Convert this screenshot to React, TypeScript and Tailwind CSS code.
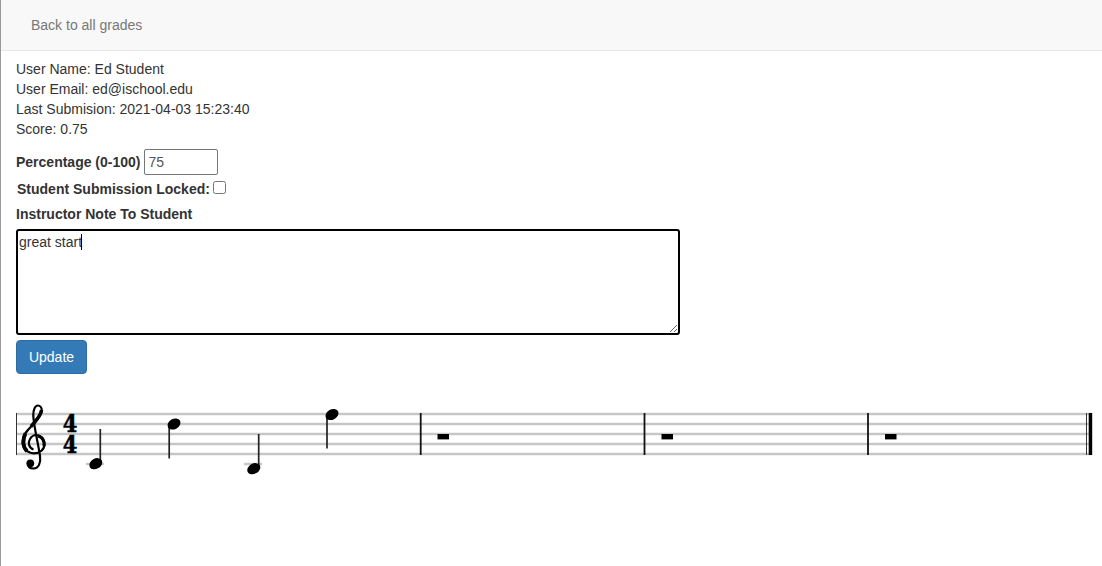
const staffLines = [414, 424, 434, 444, 454];
const barLines = [420.7, 644.5, 868];
const rests = [437.5, 661.5, 885];

const notes = [
  { cx: 95.8, cy: 463.7, stemX: 100.3, stemTop: 429, stemBottom: 463 },
  { cx: 174, cy: 424, stemX: 169.2, stemTop: 424, stemBottom: 458.5 },
  { cx: 253.8, cy: 468.7, stemX: 258.7, stemTop: 434, stemBottom: 468 },
  { cx: 332, cy: 414.5, stemX: 327, stemTop: 414, stemBottom: 448.5 },
];

function Score() {
  return (
    <svg width="1102" height="90" viewBox="0 395 1102 90" className="block -ml-px">
      {staffLines.map((y) => (
        <line key={y} x1="16" x2="1092" y1={y} y2={y} stroke="#c6c6c6" strokeWidth="2.4" />
      ))}
      <line x1="16.5" x2="16.5" y1="413" y2="455" stroke="#333" strokeWidth="1" />
      {barLines.map((x) => (
        <line key={x} x1={x} x2={x} y1="413" y2="455" stroke="#111" strokeWidth="1.8" />
      ))}
      <line x1="1086.5" x2="1086.5" y1="413" y2="455" stroke="#333" strokeWidth="1" />
      <rect x="1088.7" y="413" width="3.5" height="42" fill="#000" />

      {/* treble clef */}
      <path
        d="M33.5 449.5 C29 448 27.5 443 30 439 C31.5 436.5 33.5 435 36 435 C41 435 44.5 439 44.5 444 C44.5 449.5 40 453.3 33.8 453.3 C27 453.3 22.5 448 22.5 441.5 C22.5 434 29 429 33.5 424 C38 419 41.8 415 41.8 410.5 C41.8 407.5 40 405.5 37.8 405.5 C35 405.5 33.3 410 33.3 415 C33.3 424 38.5 445 40 456 C41 463 38.5 468.5 33.5 468.5 C30 468.5 28 466.5 28 464"
        fill="none"
        stroke="#000"
        strokeWidth="2.2"
      />
      <path d="M25.5 433.5 C22.5 439 22.5 447 27 451" fill="none" stroke="#000" strokeWidth="3.8" />
      <path d="M38 436 C42.5 437 44.5 441 44 446" fill="none" stroke="#000" strokeWidth="3.2" />
      <path d="M31 426.5 C36 421 41 415.5 41.5 410" fill="none" stroke="#000" strokeWidth="3.4" />
      <circle cx="30.3" cy="463.3" r="3.9" fill="#000" />

      {/* time signature */}
      <text transform="translate(70 432) scale(1 1.15)" textAnchor="middle" fontFamily="'DejaVu Serif', serif" fontWeight="900" fontSize="21" fill="#000" stroke="#000" strokeWidth="0.5">4</text>
      <text transform="translate(70 452.5) scale(1 1.15)" textAnchor="middle" fontFamily="'DejaVu Serif', serif" fontWeight="900" fontSize="21" fill="#000" stroke="#000" strokeWidth="0.5">4</text>

      {/* ledger lines */}
      <line x1="86" x2="104" y1="464" y2="464" stroke="#c6c6c6" strokeWidth="2.4" />
      <line x1="244" x2="262" y1="464" y2="464" stroke="#c6c6c6" strokeWidth="2.4" />

      {notes.map((n) => (
        <g key={n.cx}>
          <line x1={n.stemX} x2={n.stemX} y1={n.stemTop} y2={n.stemBottom} stroke="#222" strokeWidth="1.7" />
          <ellipse cx={n.cx} cy={n.cy} rx="6.9" ry="5.1" transform={`rotate(-30 ${n.cx} ${n.cy})`} fill="#000" />
        </g>
      ))}

      {rests.map((x) => (
        <rect key={x} x={x} y="434" width="11.5" height="5.4" fill="#000" />
      ))}
    </svg>
  );
}

export default function App() {
  return (
    <div className="min-h-[566px] border-l border-[#9a9a9a] bg-white text-[14px] leading-5 text-[#333] font-['Liberation_Sans',Arial,sans-serif] overflow-hidden">
      <nav className="h-[51px] border-b border-[#e7e7e7] bg-[#f8f8f8] pl-[30px] pt-[15px]">
        <a className="text-[#777]">Back to all grades</a>
      </nav>

      <div className="pl-[15px] pt-2">
        <div>User Name: Ed Student</div>
        <div>User Email: ed@ischool.edu</div>
        <div>Last Submision: 2021-04-03 15:23:40</div>
        <div>Score: 0.75</div>

        <div className="mt-[10px] flex h-[26px] items-center">
          <label className="font-bold">Percentage (0-100)</label>
          <input
            defaultValue="75"
            className="ml-[3px] h-[26px] w-[74px] rounded-[2px] border border-[#767676] px-1 text-[#555] outline-none"
          />
        </div>

        <div className="mt-[4px] flex h-[20px] items-center pl-px">
          <label className="font-bold">Student Submission Locked:</label>
          <input type="checkbox" className="ml-[3px] mb-[3px] size-[13px] accent-white" />
        </div>

        <label className="mt-[5px] block font-bold">Instructor Note To Student</label>

        <div className="relative mt-[5px] h-[106px] w-[664px]">
          <textarea
            defaultValue="great start"
            className="block h-full w-full rounded-[3px] border-2 border-black px-px py-px text-[14px] leading-[20px] text-[#333] outline-none"
          />
          <span className="absolute left-[65px] top-[5px] h-4 w-px bg-black" />
        </div>

        <button className="mt-[5px] block h-[34px] w-[71px] rounded-[4px] border border-[#2e6da4] bg-[#337ab7] text-center text-white">
          Update
        </button>
      </div>

      <div className="mt-[21px]">
        <Score />
      </div>
    </div>
  );
}
